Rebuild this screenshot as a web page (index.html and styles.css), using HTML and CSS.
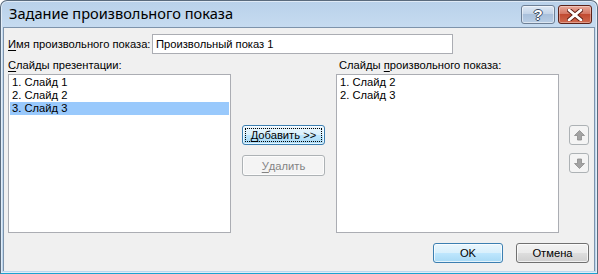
FILE: index.html
```html
<!DOCTYPE html>
<html lang="ru">
<head>
<meta charset="UTF-8">
<title>Задание произвольного показа</title>
<link rel="stylesheet" href="styles.css">
</head>
<body>
<div class="window">
  <div class="titlebar">
    <div class="title">Задание произвольного показа</div>
    <div class="caption-btns">
      <div class="cap-btn help"><span>?</span></div>
      <div class="cap-btn close">
        <svg width="16" height="12" viewBox="0 0 16 12"><path d="M2 1 L14 11 M14 1 L2 11" stroke="#5a1a12" stroke-width="4.6" stroke-linecap="round"/><path d="M2 1 L14 11 M14 1 L2 11" stroke="#fff" stroke-width="2.8" stroke-linecap="round"/></svg>
      </div>
    </div>
  </div>
  <div class="client">
    <div class="name-row">
      <label class="lbl"><u>И</u>мя произвольного показа:</label>
      <div class="textbox">Произвольный показ 1</div>
    </div>
    <div class="lists">
      <div class="col">
        <div class="lbl"><u>С</u>лайды презентации:</div>
        <div class="listbox">
          <div class="item">1. Слайд 1</div>
          <div class="item">2. Слайд 2</div>
          <div class="item selected">3. Слайд 3</div>
        </div>
      </div>
      <div class="mid">
        <div class="btn focus"><span class="focus-rect"><u>Д</u>обавить &gt;&gt;</span></div>
        <div class="btn disabled"><u>У</u>далить</div>
      </div>
      <div class="col right">
        <div class="lbl">Слайды <u>п</u>роизвольного показа:</div>
        <div class="listbox">
          <div class="item">1. Слайд 2</div>
          <div class="item">2. Слайд 3</div>
        </div>
      </div>
      <div class="arrows">
        <div class="arrow-btn"><svg width="11" height="11" viewBox="0 0 11 11"><path d="M5.5 0.5 L10.5 5.5 L7.5 5.5 L7.5 10 L3.5 10 L3.5 5.5 L0.5 5.5 Z" fill="#a3a3a3" stroke="#8c8c8c" stroke-width="0.8" stroke-linejoin="round"/></svg></div>
        <div class="arrow-btn"><svg width="11" height="11" viewBox="0 0 11 11"><path d="M5.5 10.5 L10.5 5.5 L7.5 5.5 L7.5 1 L3.5 1 L3.5 5.5 L0.5 5.5 Z" fill="#a3a3a3" stroke="#8c8c8c" stroke-width="0.8" stroke-linejoin="round"/></svg></div>
      </div>
    </div>
    <div class="footer">
      <div class="btn default">OK</div>
      <div class="btn cancel">Отмена</div>
    </div>
  </div>
</div>
</body>
</html>
```

FILE: styles.css
```css
:root {
  --ui-font: "Liberation Sans", Arial, sans-serif;
  --title-font: "Noto Sans", "Open Sans", sans-serif;
  --face: #f0f0f0;
  --list-border: #abadb3;
}
* { box-sizing: border-box; }
body { margin: 0; background: #fff; font-family: var(--ui-font); font-size: 11.2px; color: #000; }

.window {
  width: 598px; height: 274px;
  border: 1px solid #5a6b7d;
  border-radius: 7px 7px 0 0;
  background: linear-gradient(180deg, #b9d1ea 0, #c6dbf0 26px, #bcd6ee 100%);
  box-shadow: inset 0 0 0 1px rgba(255,255,255,0.55);
  padding: 0 2px 2px 2px;
  display: flex; flex-direction: column;
  border-bottom-color: #1aa3d0;
}

.titlebar { height: 26px; display: flex; align-items: flex-start; justify-content: space-between; }
.title { font-family: var(--title-font); font-size: 14.6px; line-height: 20px; padding: 2px 0 0 6px; color: #000; }
.caption-btns { display: flex; gap: 3px; padding: 4px 3px 0 0; }
.cap-btn {
  width: 34px; height: 19px; border-radius: 3px;
  display: flex; align-items: center; justify-content: center;
}
.cap-btn.help {
  border: 1px solid #6d7f95;
  background: linear-gradient(180deg, #dfe9f5 0, #c3d4e8 45%, #a9c0db 50%, #b9cee5 100%);
  box-shadow: inset 0 0 0 1px rgba(255,255,255,0.5);
}
.cap-btn.help span {
  font-family: "Liberation Sans", sans-serif; font-weight: bold; font-size: 15px; line-height: 15px;
  color: #fff;
  text-shadow: 1px 0 0 #3d4d63, -1px 0 0 #3d4d63, 0 1px 0 #3d4d63, 0 -1px 0 #3d4d63;
}
.cap-btn.close {
  border: 1px solid #5c2118;
  background: linear-gradient(180deg, #e9a99a 0, #d47764 45%, #c14a31 50%, #cf6a4f 100%);
  box-shadow: inset 0 0 0 1px rgba(255,255,255,0.35);
}

.client {
  flex: 1;
  background: var(--face);
  border: 1px solid #7d93ab;
  border-bottom: 0;
  padding: 6px 0 0 4px;
  display: flex; flex-direction: column;
}

.lbl { line-height: 15px; white-space: nowrap; }
.lbl u { text-decoration: underline; text-underline-offset: 2px; }

.name-row { display: flex; align-items: center; height: 20px; }
.name-row .lbl { width: 144px; flex-shrink: 0; }
.textbox {
  width: 301px; height: 20px;
  border: 1px solid var(--list-border);
  background: #fff;
  padding: 1px 3px 0;
  line-height: 16px;
}

.lists { display: flex; margin-top: 4px; }
.col { width: 223px; display: flex; flex-direction: column; }
.col .lbl { height: 16px; padding-left: 0; }
.col.right .lbl { padding-left: 3px; }
.listbox {
  height: 159px;
  border: 1px solid var(--list-border);
  background: #fff;
  padding: 1px 1px 0;
}
.item { line-height: 13px; height: 13px; padding-left: 2px; }
.item.selected { background: #99c9fc; }

.mid { width: 105px; display: flex; flex-direction: column; align-items: center; padding-top: 67px; gap: 10px; }
.btn {
  height: 20px;
  border: 1px solid #707070;
  border-radius: 3px;
  display: flex; align-items: center; justify-content: center;
  background: linear-gradient(180deg, #f2f2f2 0, #ebebeb 48%, #dddddd 52%, #cfcfcf 100%);
  box-shadow: inset 0 0 0 1px rgba(255,255,255,0.7);
  line-height: 14px;
}
.btn u { text-decoration: underline; text-underline-offset: 2px; }
.mid .btn { width: 83px; }
.btn.focus {
  border-color: #3c7fb1;
  background: linear-gradient(180deg, #eaf6fd 0, #d9f0fc 48%, #bee6fd 52%, #a7d9f5 100%);
  padding: 2px;
}
.focus-rect {
  width: 100%; height: 100%;
  border: 1px dotted #000;
  display: flex; align-items: center; justify-content: center;
}
.btn.disabled {
  border-color: #adb2b5;
  background: #f4f4f4;
  color: #838383;
  height: 21px;
}

.arrows { display: flex; flex-direction: column; gap: 8px; padding: 67px 0 0 10px; }
.arrow-btn {
  width: 20px; height: 20px;
  border: 1px solid #adb2b5;
  border-radius: 3px;
  background: #f4f4f4;
  display: flex; align-items: center; justify-content: center;
}

.footer { display: flex; justify-content: flex-end; gap: 13px; margin-top: 10px; padding-right: 5px; }
.btn.default {
  width: 70px;
  border-color: #3c7fb1;
  background: linear-gradient(180deg, #eaf6fd 0, #d9f0fc 48%, #bee6fd 52%, #a7d9f5 100%);
}
.btn.cancel { width: 73px; }
```
